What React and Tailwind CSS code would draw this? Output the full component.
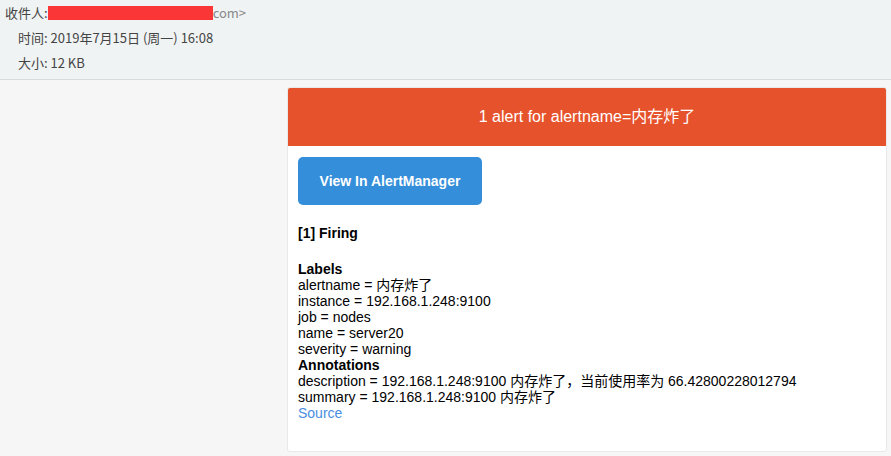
import React from 'react';

function MailHeader() {
    return (
        <div className="bg-[#f0f3f3] border-b border-[#d9dcdc] h-[80px] text-[13px] text-[#444] font-['Microsoft_YaHei','Noto_Sans_CJK_SC',sans-serif]">
            <div className="flex items-center h-[25px] pl-[5px]">
                <span>收件人:</span>
                <span className="inline-block bg-[#fb3637] w-[165px] h-[14px] mt-[1px]"></span>
                <span className="text-[#888]">com&gt;</span>
            </div>
            <div className="flex items-center h-[25px] pl-[18px]">时间: 2019年7月15日 (周一) 16:08</div>
            <div className="flex items-center h-[25px] pl-[18px]">大小: 12 KB</div>
        </div>
    );
}

function AlertCard() {
    const labels = [
        ['alertname', '内存炸了'],
        ['instance', '192.168.1.248:9100'],
        ['job', 'nodes'],
        ['name', 'server20'],
        ['severity', 'warning'],
    ];
    const annotations = [
        ['description', '192.168.1.248:9100 内存炸了，当前使用率为 66.42800228012794'],
        ['summary', '192.168.1.248:9100 内存炸了'],
    ];
    return (
        <div className="w-[600px] bg-white border border-[#e9e9e9] rounded-[3px] overflow-hidden">
            <div className="bg-[#e6522c] h-[58px] flex items-center justify-center text-white text-[16px]">
                1 alert for alertname=内存炸了
            </div>
            <div className="px-[10px] pt-[11px] pb-[30px] text-[14px] leading-[16px] text-black">
                <div className="w-[184px] h-[48px] bg-[#348eda] rounded-[5px] flex items-center justify-center text-white font-bold text-[14px]">
                    View In AlertManager
                </div>
                <div className="mt-[20px] font-bold">[1] Firing</div>
                <div className="mt-[20px] font-bold">Labels</div>
                {labels.map(([k, v]) => (
                    <div key={k}>{k} = {v}</div>
                ))}
                <div className="font-bold">Annotations</div>
                {annotations.map(([k, v]) => (
                    <div key={k}>{k} = {v}</div>
                ))}
                <div className="text-[#4a8ee0]">Source</div>
            </div>
        </div>
    );
}

export default function App() {
    return (
        <div className="w-[891px] h-[456px] overflow-hidden bg-[#f6f6f6] font-['Liberation_Sans','Noto_Sans_CJK_SC',sans-serif]">
            <MailHeader />
            <div className="pl-[287px] pt-[7px]">
                <AlertCard />
            </div>
        </div>
    );
}
